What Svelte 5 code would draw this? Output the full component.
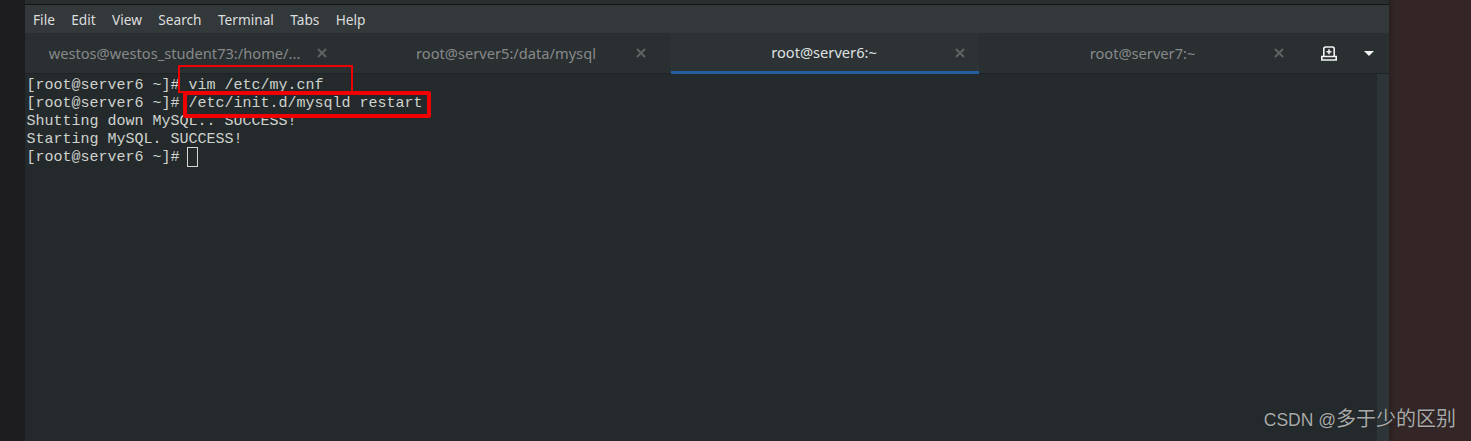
<script>
  const menus = ['File', 'Edit', 'View', 'Search', 'Terminal', 'Tabs', 'Help'];
  const tabs = [
    { title: 'westos@westos_student73:/home/...', cls: 'w1' },
    { title: 'root@server5:/data/mysql', cls: 'w2' },
    { title: 'root@server6:~', cls: 'w3 active' },
    { title: 'root@server7:~', cls: 'w4' }
  ];
  const lines = [
    '[root@server6 ~]# vim /etc/my.cnf',
    '[root@server6 ~]# /etc/init.d/mysqld restart',
    'Shutting down MySQL.. SUCCESS!',
    'Starting MySQL. SUCCESS!'
  ];
</script>

<div class="desktop">
  <div class="edge-left"></div>
  <div class="window">
    <div class="topline"></div>
    <nav class="menubar">
      {#each menus as m}<span>{m}</span>{/each}
    </nav>
    <div class="tabbar">
      {#each tabs as t}
        <div class="tab {t.cls}">
          <span class="title">{t.title}</span>
          <svg class="close" width="10" height="10" viewBox="0 0 10 10"><path d="M1 1l8 8M9 1l-8 8" /></svg>
        </div>
      {/each}
      <div class="actions">
        <svg class="newtab" width="16" height="15" viewBox="0 0 16 15">
          <path d="M2.800 10.500V2.200L4 1h8l1.200 1.200v8.300M2.800 10.500H.8V14h14.400v-3.500h-2M2.800 10.500h10.400" />
          <path d="M8 3.200v5M5.500 5.700h5" />
        </svg>
        <span class="caret"></span>
      </div>
    </div>
    <div class="body">
      <pre class="term">{#each lines as l}{l}{'\n'}{/each}[root@server6 ~]# <span class="cursor"></span></pre>
      <div class="scroll"></div>
      <div class="mark thin"></div>
      <div class="mark thick"></div>
    </div>
  </div>
  <div class="edge-right"></div>
  <div class="wm"><span class="latin">CSDN @</span>多于少的区别</div>
</div>

<style>
  :global(body) { margin: 0; background: #1e1e1f; }
  .desktop { width: 1471px; height: 441px; display: flex; position: relative; overflow: hidden; }
  .edge-left { width: 25px; background: #1d1d1f; }
  .edge-right { flex: 1; background: linear-gradient(90deg, #2a2020, #342626 6px); }
  .window { width: 1364px; display: flex; flex-direction: column; background: #24292c; }
  .topline { height: 5px; background: #2a2d2e; border-bottom: 1px solid #131516; box-sizing: border-box; }
  .menubar { height: 28px; display: flex; align-items: center; padding-left: 8px; background: #33383b; color: #dcdede; font: 13.700px "Noto Sans", sans-serif; }
  .menubar span { margin-right: 16.300px; }
  .tabbar { height: 41px; display: flex; background: #2a2f31; }
  .tab { position: relative; display: flex; align-items: center; justify-content: center; box-sizing: border-box; color: #87898a; font: 14.650px "Noto Sans", sans-serif; border-bottom: 1px solid #1f2325; padding-bottom: 1px; }
  .w1 { width: 323px; padding-right: 24px; }
  .w2 { width: 323px; padding-right: 7px; }
  .w3 { width: 308px; padding-right: 2px; }
  .w4 { width: 320px; padding-left: 7px; }
  .active { color: #dfe1e1; background: #2d3235; border-bottom: 3px solid #24609f; padding-bottom: 0; }
  .close { position: absolute; top: 15px; fill: none; stroke: #5f6364; stroke-width: 2; }
  .w1 .close { right: 21px; }
  .w2 .close { right: 25px; }
  .w3 .close { right: 14px; }
  .w4 .close { right: 15px; }
  .actions { flex: 1; display: flex; align-items: center; justify-content: flex-end; gap: 27px; padding-right: 15px; border-bottom: 1px solid #1f2325; box-sizing: border-box; }
  .newtab { fill: none; stroke: #f2f2f2; stroke-width: 1.600; }
  .caret { width: 0; height: 0; border: 5px solid transparent; border-top: 5px solid #f2f2f2; border-bottom: 0; }
  .body { flex: 1; display: flex; position: relative; background: #24292c; }
  .term { flex: 1; margin: 0; padding: 3px 0 0 1.500px; color: #cfd3cc; font: 15px/18px "Liberation Mono", monospace; }
  .cursor { display: inline-block; width: 11px; height: 20px; margin: -2px 0 -2px -2px; border: 1px solid #d3d7cf; box-sizing: border-box; vertical-align: middle; }
  .scroll { width: 12px; background: #2e3538; }
  .mark { position: absolute; box-sizing: border-box; border-style: solid; border-color: #f00000; }
  .thin { left: 153px; top: -9px; width: 175px; height: 28px; border-width: 2px; }
  .thick { left: 158px; top: 17px; width: 248px; height: 27px; border-width: 4px; border-radius: 2px; }
  .wm { position: absolute; right: 15px; bottom: 9px; color: #a9abab; font: 20px "Liberation Sans", "Noto Sans CJK SC", sans-serif; text-shadow: 0 0 1px #111; }
  .latin { font-size: 17.500px; }
</style>
